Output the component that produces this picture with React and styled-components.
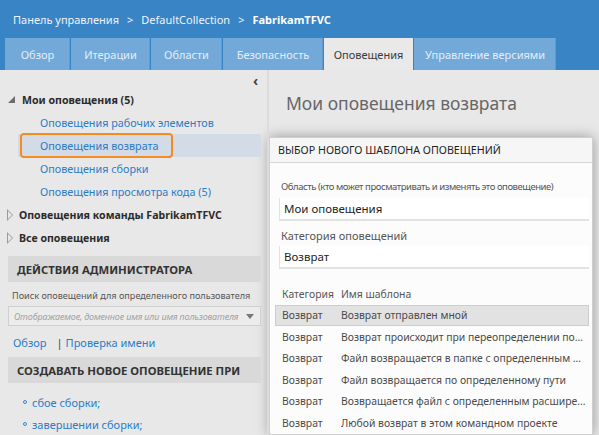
import React from 'react';
import styled, { createGlobalStyle } from 'styled-components';

const GlobalStyle = createGlobalStyle`
  html, body {
    margin: 0;
    padding: 0;
    background: #e8e8e8;
    overflow: hidden;
  }
  body {
    font-family: "Noto Sans", "Open Sans", sans-serif;
    color: #333;
  }
`;

const Page = styled.div`
  width: 599px;
  height: 435px;
  overflow: hidden;
  display: flex;
  flex-direction: column;
  background: #e8e8e8;
`;

const TopBar = styled.div`
  height: 38px;
  flex-shrink: 0;
  background: #3984c5;
  display: flex;
  align-items: center;
  padding-left: 13px;
  font-size: 11px;
  white-space: nowrap;
`;

const Crumb = styled.span`
  font-weight: ${({ bold }) => (bold ? 700 : 400)};
  color: ${({ bold }) => (bold ? '#ffffff' : '#eef4fb')};
`;

const Sep = styled.span`
  margin: 0 8px;
  color: #eef4fb;
`;

const TabRow = styled.div`
  height: 32px;
  flex-shrink: 0;
  background: #3984c5;
  display: flex;
  padding-left: 5px;
  gap: 1px;
`;

const Tab = styled.div`
  display: flex;
  align-items: center;
  justify-content: center;
  width: ${({ w }) => w}px;
  font-size: 11px;
  white-space: nowrap;
  background: ${({ active }) => (active ? '#e9e9e9' : '#72a9d8')};
  color: ${({ active }) => (active ? '#3a3a3a' : '#e2edf8')};
  box-shadow: inset -1px 0 0 ${({ active }) => (active ? '#e9e9e9' : '#5f9bd0')};
`;

const Main = styled.div`
  flex: 1;
  display: flex;
  min-height: 0;
`;

const Sidebar = styled.div`
  width: 261px;
  flex-shrink: 0;
  padding-right: 6px;
  border-right: 2px solid #dcdcdc;
  display: flex;
  flex-direction: column;
  position: relative;
  white-space: nowrap;
`;

const Collapse = styled.div`
  position: absolute;
  right: 9px;
  top: 1px;
  font-size: 14px;
  font-weight: 700;
  color: #444;
`;

const Tree = styled.div`
  padding-top: 18px;
  display: flex;
  flex-direction: column;
`;

const Node = styled.div`
  height: 23px;
  display: flex;
  align-items: center;
  padding-left: ${({ open }) => (open ? 8 : 7)}px;
  font-size: 10.6px;
  font-weight: 700;
  color: #2b2b2b;
`;

const Arrow = styled.span`
  width: 0;
  height: 0;
  margin-right: 7px;
  border-left: 7px solid transparent;
  border-bottom: 7px solid #6d6d6d;
`;

const HollowArrow = styled.span`
  position: relative;
  width: 0;
  height: 0;
  margin-right: 6px;
  border-top: 6px solid transparent;
  border-bottom: 6px solid transparent;
  border-left: 6px solid #9a9a9a;
  &::after {
    content: '';
    position: absolute;
    left: -5px;
    top: -4px;
    border-top: 4px solid transparent;
    border-bottom: 4px solid transparent;
    border-left: 4px solid #e8e8e8;
  }
`;

const Leaf = styled.div`
  height: 23px;
  display: flex;
  align-items: center;
  margin-left: ${({ selected }) => (selected ? 18 : 0)}px;
  padding-left: ${({ selected }) => (selected ? 22 : 40)}px;
  font-size: 10.8px;
  color: #2a7cc7;
  background: ${({ selected }) => (selected ? '#d3dbe6' : 'transparent')};
  position: relative;
`;

const Highlight = styled.div`
  position: absolute;
  left: 2px;
  top: -1px;
  width: 153px;
  height: 25px;
  box-sizing: border-box;
  border: 2.5px solid #f68b1f;
  border-radius: 4px;
`;

const SectionBar = styled.div`
  margin: ${({ mt }) => mt || 0}px 0 0 8px;
  height: 26px;
  flex-shrink: 0;
  background: #d9d9d9;
  display: flex;
  align-items: center;
  padding-left: 9px;
  font-size: 11.3px;
  font-weight: 700;
  color: #333;
`;

const FieldLabel = styled.div`
  margin: 7px 0 0 12px;
  height: 14px;
  line-height: 14px;
  font-size: 9.1px;
  color: #555;
`;

const Combo = styled.div`
  margin: 3px 0 0 8px;
  height: 18px;
  border: 1px solid #d0d0d0;
  background: #ececec;
  display: flex;
  align-items: center;
  justify-content: space-between;
  padding: 0 6px 0 5px;
  font-size: 9px;
  letter-spacing: -0.15px;
  font-style: italic;
  color: #a2a2a2;
  overflow: hidden;
`;

const ComboArrow = styled.span`
  width: 0;
  height: 0;
  flex-shrink: 0;
  border-left: 4px solid transparent;
  border-right: 4px solid transparent;
  border-top: 5px solid #777;
`;

const LinkRow = styled.div`
  margin: 7px 0 0 13px;
  font-size: 11px;
  display: flex;
  align-items: center;
  height: 18px;
`;

const Link = styled.span`
  color: #2a7cc7;
`;

const Pipe = styled.span`
  margin: 0 3px 0 10px;
  color: #444;
`;

const BulletList = styled.ul`
  list-style: none;
  margin: 8px 0 0 0;
  padding: 0 0 0 23px;
`;

const Bullet = styled.li`
  height: 22px;
  display: flex;
  align-items: center;
  font-size: 11px;
  color: #2a7cc7;
  &::before {
    content: '';
    width: 2px;
    height: 2px;
    border: 1px solid #3a86cc;
    border-radius: 50%;
    margin-right: 5px;
  }
`;

const Content = styled.div`
  flex: 1;
  display: flex;
  flex-direction: column;
  min-width: 0;
`;

const Title = styled.h1`
  margin: 0;
  padding: 21px 0 0 17px;
  height: 45px;
  flex-shrink: 0;
  box-sizing: border-box;
  font-size: 17.5px;
  line-height: 24px;
  font-weight: 400;
  color: #676767;
  white-space: nowrap;
`;

const Dialog = styled.div`
  margin: 22px 6px 0 0;
  background: #fcfcfc;
  border: 1px solid #cfcfcf;
  box-shadow: 0 0 12px rgba(0, 0, 0, 0.35);
  display: flex;
  flex-direction: column;
  flex-shrink: 0;
`;

const DialogHeader = styled.div`
  height: 24px;
  background: #f6f6f6;
  border-bottom: 1px solid #d6d6d6;
  display: flex;
  align-items: center;
  padding-left: 8px;
  font-size: 10.7px;
  color: #1e1e1e;
  white-space: nowrap;
`;

const DialogBody = styled.div`
  padding: 17px 3px 0 10px;
  display: flex;
  flex-direction: column;
`;

const Label = styled.div`
  font-size: ${({ narrow }) => (narrow ? 9.5 : 11)}px;
  letter-spacing: ${({ narrow }) => (narrow ? -0.45 : 0)}px;
  color: #555;
  margin-top: ${({ mt }) => mt || 0}px;
  padding-left: 1px;
  height: 14px;
  line-height: 14px;
  white-space: nowrap;
  overflow: hidden;
`;

const Input = styled.div`
  margin: ${({ mt }) => mt || 4}px 0 0 -1px;
  height: 21px;
  background: #ffffff;
  border-left: 1px solid #e2e2e2;
  border-bottom: 2px solid #e2e2e2;
  display: flex;
  align-items: center;
  padding-left: 4px;
  font-size: 11.5px;
  color: #1e1e1e;
`;

const Table = styled.div`
  margin: 14px 0 0 -5px;
  display: flex;
  flex-direction: column;
`;

const Row = styled.div`
  height: 21.5px;
  box-sizing: border-box;
  display: grid;
  grid-template-columns: 59px minmax(0, 1fr);
  align-items: center;
  padding-left: 6px;
  font-size: 10.4px;
  color: ${({ head }) => (head ? '#555' : '#4a4a4a')};
  background: ${({ selected }) => (selected ? '#e2e2e2' : 'transparent')};
  border: 1px solid ${({ selected }) => (selected ? '#cdcdcd' : 'transparent')};
  white-space: nowrap;
  overflow: hidden;
`;

const Cell = styled.span`
  overflow: hidden;
  text-overflow: ellipsis;
  padding-right: 2px;
`;

const templates = [
  'Возврат отправлен мной',
  'Возврат происходит при переопределении политики',
  'Файл возвращается в папке с определенным именем',
  'Файл возвращается по определенному пути',
  'Возвращается файл с определенным расширением',
  'Любой возврат в этом командном проекте',
];

const tabs = [
  { name: 'Обзор', w: 65 },
  { name: 'Итерации', w: 79 },
  { name: 'Области', w: 71 },
  { name: 'Безопасность', w: 100 },
  { name: 'Оповещения', w: 89, active: true },
  { name: 'Управление версиями', w: 142 },
];

export default function App() {
  return (
    <>
      <GlobalStyle />
      <Page>
        <TopBar>
          <Crumb>Панель управления</Crumb>
          <Sep>&gt;</Sep>
          <Crumb>DefaultCollection</Crumb>
          <Sep>&gt;</Sep>
          <Crumb bold>FabrikamTFVC</Crumb>
        </TopBar>
        <TabRow>
          {tabs.map((t) => (
            <Tab key={t.name} w={t.w} active={t.active}>{t.name}</Tab>
          ))}
        </TabRow>
        <Main>
          <Sidebar>
            <Collapse>‹</Collapse>
            <Tree>
              <Node open><Arrow />Мои оповещения (5)</Node>
              <Leaf>Оповещения рабочих элементов</Leaf>
              <Leaf selected>
                <Highlight />
                Оповещения возврата
              </Leaf>
              <Leaf>Оповещения сборки</Leaf>
              <Leaf>Оповещения просмотра кода (5)</Leaf>
              <Node><HollowArrow />Оповещения команды FabrikamTFVC</Node>
              <Node><HollowArrow />Все оповещения</Node>
            </Tree>
            <SectionBar mt={7}>ДЕЙСТВИЯ АДМИНИСТРАТОРА</SectionBar>
            <FieldLabel>Поиск оповещений для определенного пользователя</FieldLabel>
            <Combo>
              Отображаемое, доменное имя или имя пользователя
              <ComboArrow />
            </Combo>
            <LinkRow>
              <Link>Обзор</Link>
              <Pipe>|</Pipe>
              <Link>Проверка имени</Link>
            </LinkRow>
            <SectionBar mt={6}>СОЗДАВАТЬ НОВОЕ ОПОВЕЩЕНИЕ ПРИ</SectionBar>
            <BulletList>
              <Bullet>сбое сборки;</Bullet>
              <Bullet>завершении сборки;</Bullet>
            </BulletList>
          </Sidebar>
          <Content>
            <Title>Мои оповещения возврата</Title>
            <Dialog>
              <DialogHeader>ВЫБОР НОВОГО ШАБЛОНА ОПОВЕЩЕНИЙ</DialogHeader>
              <DialogBody>
                <Label narrow>Область (кто может просматривать и изменять это оповещение)</Label>
                <Input>Мои оповещения</Input>
                <Label mt={8}>Категория оповещений</Label>
                <Input mt={3}>Возврат</Input>
                <Table>
                  <Row head>
                    <Cell>Категория</Cell>
                    <Cell>Имя шаблона</Cell>
                  </Row>
                  {templates.map((t, i) => (
                    <Row key={t} selected={i === 0}>
                      <Cell>Возврат</Cell>
                      <Cell>{t}</Cell>
                    </Row>
                  ))}
                </Table>
              </DialogBody>
            </Dialog>
          </Content>
        </Main>
      </Page>
    </>
  );
}
